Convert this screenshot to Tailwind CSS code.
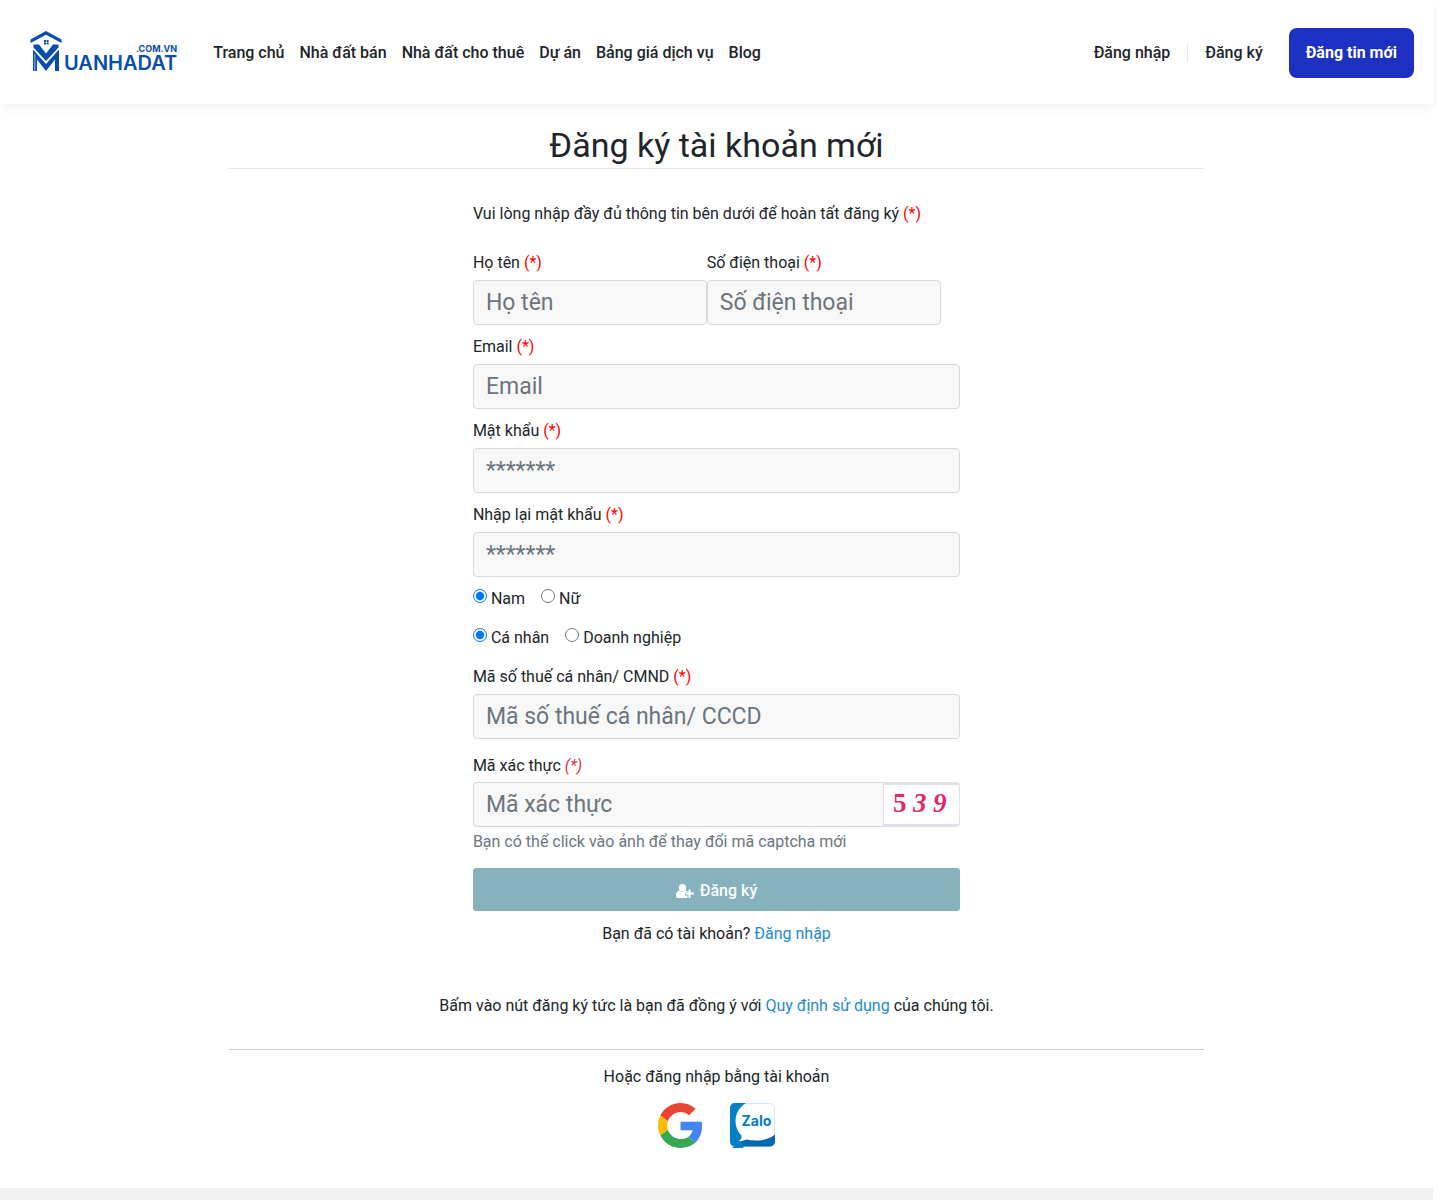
<!DOCTYPE html>
<html lang="vi">
<head>
  <meta charset="UTF-8">
  <meta name="viewport" content="width=device-width, initial-scale=1">
  <title>Đăng ký tài khoản mới</title>
  <script src="https://cdn.jsdelivr.net/npm/@tailwindcss/browser@4"></script>
</head>
<body class="bg-white pr-[6px] font-['Roboto',sans-serif] text-base leading-6 text-[#212529]">

  <header class="flex h-[104px] items-center justify-between pt-0.5 pl-[30px] pr-[19px] shadow-[0_4px_10px_rgba(0,0,0,0.06)]">
    <div class="flex items-center">
      <!-- Logo -->
      <a href="#" class="mr-8 flex items-end gap-0.5 pb-1 text-[#054eae]" aria-label="Muanhadat.com.vn">
        <svg class="h-[41px] w-8" viewBox="0 0 32 41" fill="currentColor">
          <path d="M.5 8.500 16 0l15.500 8.500v3.500L16 3.800 .5 12z"/>
          <path d="M14 9h2v2h-2zM16.600 9h2v2h-2zM14 11.600h2v2h-2zM16.600 11.600h2v2h-2z"/>
          <path d="M3.500 13.500H9L16 22.500l7-9h5.500v3L16 30 3.500 16.500z"/>
          <path d="M3 18.500 16 33l13-14.500V40h-4V28.500L16 40 7 28.500V40H3z"/>
          <path d="M4.800 23v17" fill="none" stroke="#fff" stroke-width=".6"/>
        </svg>
        <span class="flex flex-col items-end font-['Inter',sans-serif]">
          <span class="text-[9px] font-bold leading-[10px]">.COM.VN</span>
          <span class="text-[20px] font-semibold leading-[18px]">UANHADAT</span>
        </span>
      </a>
      <nav class="ml-1 flex gap-[15px] font-medium">
        <a href="#">Trang chủ</a>
        <a href="#">Nhà đất bán</a>
        <a href="#">Nhà đất cho thuê</a>
        <a href="#">Dự án</a>
        <a href="#">Bảng giá dịch vụ</a>
        <a href="#">Blog</a>
      </nav>
    </div>
    <div class="flex items-center font-medium">
      <a href="#" class="pr-[17px]">Đăng nhập</a>
      <a href="#" class="border-l border-gray-200 pl-[17px] leading-[18px]">Đăng ký</a>
      <a href="#" class="ml-[26px] rounded-lg bg-[#1c30c1] px-[17px] py-[13px] font-bold text-white">Đăng tin mới</a>
    </div>
  </header>

  <main class="mx-auto w-[68%]">
    <h1 class="border-b border-[#e3e6e8] pt-[21px] pb-0.5 text-center text-[34px] leading-[41px]">Đăng ký tài khoản mới</h1>

    <form class="mx-auto w-1/2 pt-[33px]">
      <p class="mb-[25px]">Vui lòng nhập đầy đủ thông tin bên dưới để hoàn tất đăng ký <span class="text-[#f00]">(*)</span></p>

      <div class="mb-2.5 flex w-[96%]">
        <div class="w-1/2">
          <label for="name" class="mb-[5px] block">Họ tên <span class="text-[#f00]">(*)</span></label>
          <input type="text" id="name" placeholder="Họ tên" class="block h-[45px] w-full rounded border border-[#d6dadf] bg-[#f8f8f8] px-3 text-[23px] placeholder:text-[#6c757d]">
        </div>
        <div class="w-1/2">
          <label for="phone" class="mb-[5px] block">Số điện thoại <span class="text-[#f00]">(*)</span></label>
          <input type="tel" id="phone" placeholder="Số điện thoại" class="block h-[45px] w-full rounded border border-[#d6dadf] bg-[#f8f8f8] px-3 text-[23px] placeholder:text-[#6c757d]">
        </div>
      </div>

      <div class="mb-2.5">
        <label for="email" class="mb-[5px] block">Email <span class="text-[#f00]">(*)</span></label>
        <input type="email" id="email" placeholder="Email" class="block h-[45px] w-full rounded border border-[#d6dadf] bg-[#f8f8f8] px-3 text-[23px] placeholder:text-[#6c757d]">
      </div>

      <div class="mb-2.5">
        <label for="password" class="mb-[5px] block">Mật khẩu <span class="text-[#f00]">(*)</span></label>
        <input type="password" id="password" placeholder="*******" class="block h-[45px] w-full rounded border border-[#d6dadf] bg-[#f8f8f8] px-3 text-[23px] placeholder:text-[#6c757d]">
      </div>

      <div class="mb-2.5">
        <label for="password2" class="mb-[5px] block">Nhập lại mật khẩu <span class="text-[#f00]">(*)</span></label>
        <input type="password" id="password2" placeholder="*******" class="block h-[45px] w-full rounded border border-[#d6dadf] bg-[#f8f8f8] px-3 text-[23px] placeholder:text-[#6c757d]">
      </div>

      <div class="mb-[15px] flex gap-4">
        <label class="flex gap-1"><input type="radio" name="gender" checked class="mt-0.5 size-3.5 accent-[#0075ff]">Nam</label>
        <label class="flex gap-1"><input type="radio" name="gender" class="mt-0.5 size-3.5">Nữ</label>
      </div>

      <div class="mb-[15px] flex gap-4">
        <label class="flex gap-1"><input type="radio" name="type" checked class="mt-0.5 size-3.5 accent-[#0075ff]">Cá nhân</label>
        <label class="flex gap-1"><input type="radio" name="type" class="mt-0.5 size-3.5">Doanh nghiệp</label>
      </div>

      <div class="mb-[15px]">
        <label for="tax" class="mb-[5px] block">Mã số thuế cá nhân/ CMND <span class="text-[#f00]">(*)</span></label>
        <input type="text" id="tax" placeholder="Mã số thuế cá nhân/ CCCD" class="block h-[45px] w-full rounded border border-[#d6dadf] bg-[#f8f8f8] px-3 text-[23px] placeholder:text-[#6c757d]">
      </div>

      <div class="mb-3.5">
        <label for="captcha" class="mb-1 block">Mã xác thực <em class="text-[#dc3545]">(*)</em></label>
        <div class="flex h-[45px]">
          <input type="text" id="captcha" placeholder="Mã xác thực" class="block h-full min-w-0 flex-1 rounded-l border border-r-0 border-[#d6dadf] bg-[#f8f8f8] px-3 text-[23px] placeholder:text-[#6c757d]">
          <button type="button" aria-label="Đổi mã captcha" class="flex w-[77px] rounded-r border border-y-[3px] border-[#dfe3e8] bg-white pl-[9px] font-['Liberation_Serif',serif] text-[27px] font-bold leading-9 text-[#e6286b]">
            <span class="w-5 text-left">5</span><span class="w-5 text-left italic">3</span><span class="italic">9</span>
          </button>
        </div>
        <small class="mt-[3px] block text-base leading-6 text-[#6c757d]">Bạn có thể click vào ảnh để thay đổi mã captcha mới</small>
      </div>

      <button type="submit" class="flex h-[43px] w-full items-center justify-center gap-1.5 rounded-[3px] bg-[#86b2be] pt-0.5 font-medium text-white">
        <svg class="h-3.5 w-[18px]" viewBox="0 0 18 14" fill="currentColor">
          <circle cx="6.500" cy="3.700" r="3.700"/>
          <path d="M3.200 6.500c2 1.800 4.600 1.800 6.600 0l1.700 1v1H9v3h2.500V14h-9.500C.7 14 0 13.200 0 11.800 0 9 1 7 3.200 6.500z"/>
          <path d="M12.500 5.500h2v3H18v2h-3.500V14h-2v-3.500H9.700v-2h2.800z"/>
        </svg>
        Đăng ký
      </button>
      <p class="mt-[11px] text-center">Bạn đã có tài khoản? <a href="#" class="text-[#218cce]">Đăng nhập</a></p>
    </form>

    <p class="border-b border-[#cccfd2] pt-12 pb-[31px] text-center">Bấm vào nút đăng ký tức là bạn đã đồng ý với <a href="#" class="text-[#218cce]">Quy định sử dụng</a> của chúng tôi.</p>

    <p class="pt-[15px] text-center">Hoặc đăng nhập bằng tài khoản</p>
    <div class="flex justify-center gap-[27px] pt-3.5 pb-10">
      <a href="#" aria-label="Google">
        <svg class="size-[45px]" viewBox="0 0 48 48">
          <path fill="#ea4335" d="M24 9.500c3.540 0 6.710 1.220 9.210 3.600l6.850-6.850C35.900 2.380 30.470 0 24 0 14.620 0 6.510 5.380 2.560 13.220l7.980 6.190C12.430 13.720 17.740 9.500 24 9.500z"/>
          <path fill="#4285f4" d="M46.980 24.550c0-1.570-.15-3.090-.38-4.550H24v9.020h12.940c-.58 2.960-2.260 5.480-4.780 7.180l7.730 6c4.510-4.180 7.090-10.360 7.090-17.650z"/>
          <path fill="#fbbc05" d="M10.530 28.590c-.48-1.450-.76-2.990-.76-4.590s.27-3.140.76-4.590l-7.980-6.190C.92 16.460 0 20.120 0 24s.92 7.540 2.560 10.780l7.970-6.190z"/>
          <path fill="#34a853" d="M24 48c6.480 0 11.930-2.130 15.890-5.810l-7.730-6c-2.150 1.450-4.920 2.300-8.160 2.300-6.260 0-11.570-4.220-13.470-9.910l-7.980 6.190C6.510 42.620 14.620 48 24 48z"/>
        </svg>
      </a>
      <a href="#" aria-label="Zalo">
        <svg class="size-[45px]" viewBox="0 0 45 45">
          <rect x=".5" y=".5" width="44" height="43" rx="5" fill="#fff" stroke="#cfe6f3"/>
          <path fill="#0180c7" d="M5 0h11C3 8 3 24 11.500 32.500c.5 3-1 4.500-3 5.500L14 43l-1 2H2l2-1.500C1.500 43 0 41 0 38V5c0-3 2-5 5-5z"/>
          <path fill="#0068b0" d="M8.500 38c3 .5 6-.5 8-1.500 11 2.500 22 .5 28.500-5V38c0 3-2 5.500-5 5.500H14z"/>
          <text x="11.500" y="23" fill="#0180c7" font-family="Inter, sans-serif" font-size="14" font-weight="700">Zalo</text>
        </svg>
      </a>
    </div>
  </main>

  <footer class="h-3 bg-[#f1f1f1]"></footer>

</body>
</html>
